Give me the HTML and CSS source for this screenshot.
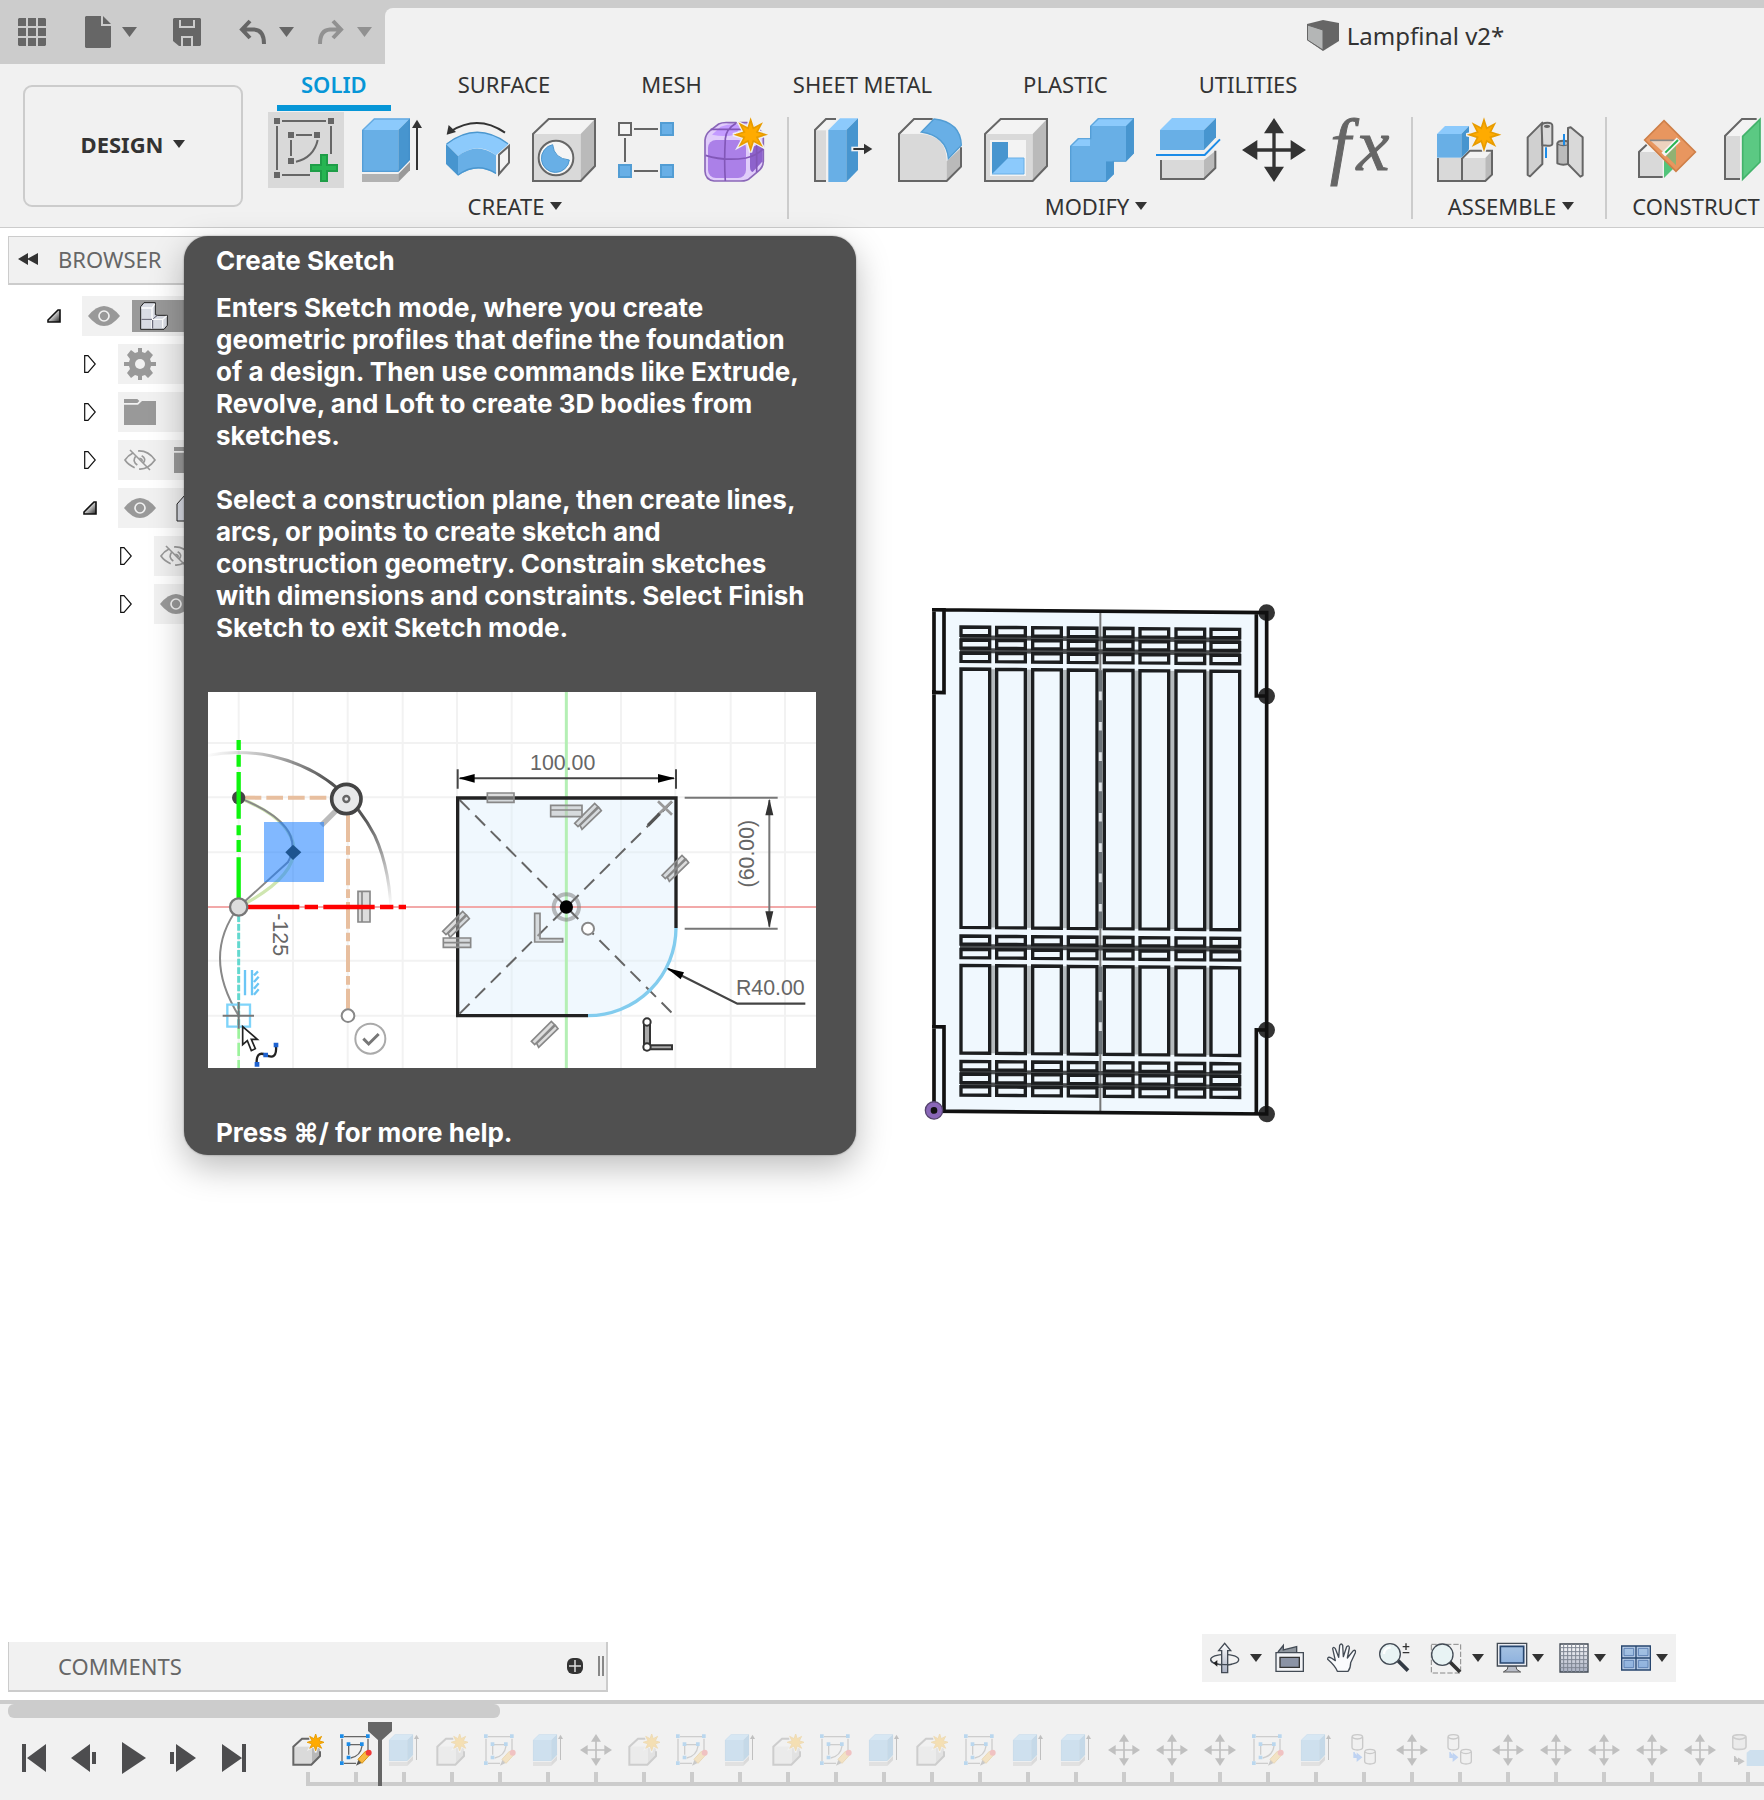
FILE: index.html
```html
<!DOCTYPE html>
<html lang="en">
<head>
<meta charset="utf-8">
<title>Lampfinal v2*</title>
<link rel="stylesheet" href="styles.css">
</head>
<body>
<svg class="defs" aria-hidden="true">
  <defs>
    <linearGradient id="steel" x1="0" y1="0" x2="0" y2="1"><stop offset="0" stop-color="#fff"/><stop offset="1" stop-color="#a9b0c2"/></linearGradient>
    <linearGradient id="screen" x1="0" y1="0" x2="0" y2="1"><stop offset="0" stop-color="#a5c2e2"/><stop offset="1" stop-color="#8fb2de"/></linearGradient>
    <linearGradient id="wedge" x1="0" y1="0" x2="1" y2="1"><stop offset="0.3" stop-color="#fff"/><stop offset="1" stop-color="#222"/></linearGradient>
    <linearGradient id="arcfade" x1="0" y1="0" x2="1" y2="1"><stop offset="0" stop-color="#555" stop-opacity="0"/><stop offset="0.4" stop-color="#555"/><stop offset="0.6" stop-color="#555"/><stop offset="0.9" stop-color="#555" stop-opacity="0"/></linearGradient>
  </defs>
  <symbol id="caret" viewBox="0 0 12 8"><path d="M0 0H12L6 8Z" fill="currentColor"/></symbol>
  <symbol id="star" viewBox="-54 -54 108 108"><path d="M0-48 8-19 32-32 19-8 48 0 19 8 32 32 8 19 0 48-8 19-32 32-19 8-48 0-19-8-32-32-8-19Z" fill="#f1f1f1" stroke="#f1f1f1" stroke-width="12"/><path d="M0-44 8-19 31-31 19-8 44 0 19 8 31 31 8 19 0 44-8 19-31 31-19 8-44 0-19-8-31-31-8-19Z" fill="#ffab00" stroke="#e89c00" stroke-width="5"/></symbol>
  <symbol id="box" viewBox="0 0 192 192"><path d="M3 48 50 3H189V144L146 189H3Z" fill="#f3f3f3"/><path d="M3 48H146V189H3Z" fill="#d9d9d9"/><path d="M146 48 189 3V144L146 189Z" fill="#bababa"/><path d="M3 48 50 3H189V144L146 189H3Z" fill="none" stroke="#666" stroke-width="6"/></symbol>
  <symbol id="move" viewBox="0 0 192 192"><path d="M96 0 126 46H101V91H146V66L192 96 146 126V101H101V146H126L96 192 66 146H91V101H46V126L0 96 46 66V91H91V46H66Z" fill="#333"/></symbol>
  <symbol id="extrude" viewBox="0 0 192 192"><path d="M6 36 42 1H150L115 36Z" fill="#8ccafc"/><path d="M6 36H115V162H6Z" fill="#68afe6"/><path d="M115 36 150 1V126L115 162Z" fill="#4795cf"/><path d="M8 37 43 3H148V125L114 160H8Z" fill="none" stroke="#3f8cc6" stroke-opacity=".5" stroke-width="4"/><path d="M6 168H115V192H6Z" fill="#b2b2b2"/><path d="M115 168 150 132V157L115 192Z" fill="#999"/><path d="M171 156V20" stroke="#333" stroke-width="6"/><path d="M171 5 186 30H156Z" fill="#333"/></symbol>
  <symbol id="eye" viewBox="0 0 96 60"><path d="M0 30Q48-30 96 30Q48 90 0 30Z" fill="#999"/><circle cx="48" cy="30" r="15" fill="#999" stroke="#f1f1f1" stroke-width="5"/></symbol>
  <symbol id="eye-off" viewBox="0 0 96 66"><g fill="none" stroke="#999" stroke-width="5"><path d="M28 11Q12 19 3 33Q12 47 32 56M45 60Q72 62 93 33Q72 4 42 6M35 22Q24 38 40 48M53 20Q68 28 58 42M46 28Q56 30 54 37"/><path d="M18 3 78 63"/></g></symbol>
  <symbol id="closed" viewBox="0 0 12 18"><path d="M.7.7H4L11.3 9 4 17.3H.7Z" fill="#fff" stroke="#111" stroke-width="1.2"/></symbol>
  <symbol id="open" viewBox="0 0 14 14"><path d="M13 1V13H1V11L11 1Z" fill="url(#wedge)" stroke="#111" stroke-width="1.6"/></symbol>
  <symbol id="folder" viewBox="0 0 96 78"><path d="M0 0H40L46 6 40 12H0ZM0 17H42L54 6H96V78H0Z" fill="#999"/></symbol>
  <symbol id="body" viewBox="0 0 84 84"><path d="M2 82V14L12 2H46V38L52 40H82V70L72 82Z" fill="#d9dce4" stroke="#222" stroke-width="3"/><path d="M4 18H36L44 6M36 18V80M4 52H36M36 52H68L80 42M68 52V78" fill="none" stroke="#fff" stroke-width="4"/><path d="M4 52H36M38 54V80M40 50 52 40" stroke="#556" stroke-width="3"/></symbol>
  <symbol id="t-comp" viewBox="0 0 96 96"><path d="M4 92V36L30 13H54L84 40V64L57 92Z" fill="#f1f1f1"/><path d="M4 38H60V92H4Z" fill="#dadada"/><path d="M60 38 84 20V66L60 92Z" fill="#b8b8b8"/><path d="M52 14H30L4 38V92H58L84 66V52" fill="none" stroke="#666" stroke-width="6"/><use href="#star" x="40" y="-6" width="62" height="62"/></symbol>
  <symbol id="t-sketch" viewBox="0 0 96 96"><g fill="none" stroke="#666" stroke-width="4"><path d="M12 8H78M6 14V82M84 14V52M12 88H48M30 32H60M26 36V62M66 36Q62 66 32 72"/></g><g fill="#1c8ce8"><path d="M0 1h11v11H0zM78 1h11v11H78zM0 82h11v11H0zM20 25h11v11H20zM60 25h11v11H60zM20 65h11v11H20z"/></g><path d="M48 95 56 76 66 86Z" fill="#555"/><path d="M54 76 76 52 88 64 66 88Z" fill="#f7b943" stroke="#d99410" stroke-width="3"/><circle cx="86" cy="56" r="9" fill="#f03a3a"/></symbol>
  <symbol id="t-copy" viewBox="-8 0 96 96"><g fill="#eee" stroke="#555" stroke-width="4"><path d="M4 10Q4 2 20 2T36 10V40Q36 48 20 48T4 40ZM42 54Q42 46 58 46T74 54V82Q74 90 58 90T42 82Z"/><path d="M4 10Q20 20 36 10M42 54Q58 64 74 54" fill="none"/></g><path d="M10 54V70H24M20 60 32 70 20 80Z" fill="#2f7df6" stroke="#2f7df6" stroke-width="4"/></symbol>
  <symbol id="t-base" viewBox="0 0 96 96"><path d="M2 10Q2 2 22 2T42 10V38Q42 46 22 46T2 38Z" fill="#ddd" stroke="#666" stroke-width="5"/><path d="M2 10Q22 22 42 10" fill="none" stroke="#666" stroke-width="5"/><path d="M8 66V82H24M20 74 34 82 20 90Z" fill="#444" stroke="#444" stroke-width="4"/><path d="M44 56 54 48H96V96H44Z" fill="#68afe6"/></symbol>
</svg>

<header class="topbar">
  <div class="quick">
    <button type="button" aria-label="Data panel"><svg class="i32" viewBox="0 0 32 32"><path d="M3 2h7v8H2V3zM12 2h8v8h-8zM22 2h7l1 1v7h-8zM2 12h8v8H2zM12 12h8v8h-8zM22 12h8v8h-8zM2 22h8v8H3l-1-1zM12 22h8v8h-8zM22 22h8v7l-1 1h-7z" fill="#666"/></svg></button>
    <button type="button" class="with-caret" aria-label="File"><svg class="i32" viewBox="0 0 32 32"><path d="M4 0H19V10H29V31L28 32H4L3 31V1ZM21 0 29 8H21Z" fill="#666"/></svg><svg class="caret16"><use href="#caret"/></svg></button>
    <button type="button" aria-label="Save"><svg class="i32" viewBox="0 0 32 32"><path d="M3 2H29L30 3V29L29 30H8L2 25V3Z" fill="#666"/><path d="M9 4V11H23V4M11 30V21H21V30" fill="none" stroke="#ccc" stroke-width="2"/><path d="M13 23h6v7h-6zM10 2h12v8H10z" fill="#666"/></svg></button>
    <div class="history">
      <button type="button" class="with-caret" aria-label="Undo"><svg class="i32" viewBox="0 0 32 32"><path d="M13 5 5 13.500 13 22M5 13.500H17Q27 14 27 28" fill="none" stroke="#666" stroke-width="4"/></svg><svg class="caret16"><use href="#caret"/></svg></button>
      <button type="button" class="with-caret faded" aria-label="Redo"><svg class="i32" viewBox="0 0 32 32"><path d="M18 5 26 13.500 18 22M26 13.500H15Q5 14 5 28" fill="none" stroke="#919191" stroke-width="4"/></svg><svg class="caret16"><use href="#caret"/></svg></button>
    </div>
  </div>
  <div class="doc-tab"><svg width="32" height="32" viewBox="0 0 32 32"><path d="M0 4 16 0 32 3V21L16 31 0 20Z" fill="#666"/><path d="M.5 5 16 10V30L.5 20Z" fill="#b4b6b6" stroke="#666"/></svg><span>Lampfinal v2*</span></div>
</header>

<section class="ribbon">
  <button type="button" class="workspace">DESIGN <svg class="caret12"><use href="#caret"/></svg></button>
  <div class="ribbon-main">
    <nav class="tabs">
      <a href="#solid" class="active">SOLID</a><a href="#surface">SURFACE</a><a href="#mesh">MESH</a><a href="#sheet">SHEET METAL</a><a href="#plastic">PLASTIC</a><a href="#utilities">UTILITIES</a>
    </nav>
    <div class="groups">
      <div class="group">
        <div class="tools">
          <button type="button" class="hot" aria-label="Create Sketch"><svg viewBox="0 0 192 192"><g fill="none" stroke="#666" stroke-width="6"><path d="M24 9H156M9 24V156M171 24V108M24 171H108M66 51H114M51 66V114M131 66C124 100 100 124 66 131"/></g><path d="M0 0h18v18H0zM162 0h18v18h-18zM0 162h18v18H0zM42 42h18v18H42zM120 42h18v18h-18zM42 120h18v18H42z" fill="#666"/><path d="M141 111H159V141H189V159H159V189H141V159H111V141H141Z" fill="#27b552" stroke="#1f9e48" stroke-width="6"/></svg></button>
          <button type="button" aria-label="Extrude"><svg><use href="#extrude"/></svg></button>
          <button type="button" aria-label="Revolve"><svg viewBox="0 0 192 192"><path d="M0 78Q92 8 188 78L150 112Q96 68 36 114Z" fill="#8ccafc"/><path d="M36 114Q92 70 150 112V168Q96 132 36 173Z" fill="#68afe6"/><path d="M0 78 36 114V173L0 138Z" fill="#4795cf"/><path d="M2 78Q92 8 186 77M36 171Q92 130 150 166" fill="none" stroke="#4b97cf" stroke-width="4"/><path d="M159 110 189 84V134L159 168Z" fill="#f3f3f3" stroke="#666" stroke-width="6"/><path d="M14 40Q96-12 177 44" fill="none" stroke="#333" stroke-width="6"/><path d="M2 50 8 21 30 42Z" fill="#333"/></svg></button>
          <button type="button" aria-label="Hole"><svg viewBox="0 0 192 192"><use href="#box"/><circle cx="72" cy="120" r="52" fill="#f5f5f5" stroke="#666" stroke-width="6"/><path d="M62 80A42 42 0 1 0 112 126Q66 122 62 80Z" fill="#68afe6" stroke="#4b97cf" stroke-width="3"/></svg></button>
          <button type="button" aria-label="Rectangular Pattern"><svg viewBox="0 0 192 192"><path d="M48 33H120M21 60V132M48 159H120" stroke="#666" stroke-width="6"/><path d="M3 15h36v36H3z" fill="#f5f5f5" stroke="#666" stroke-width="6"/><path d="M129 15h36v36h-36zM3 141h36v36H3zM129 141h36v36h-36z" fill="#68afe6" stroke="#529dd4" stroke-width="6"/></svg></button>
          <button type="button" aria-label="Create Form"><svg viewBox="0 0 192 192"><path d="M3 66Q5 48 18 38L44 18Q56 12 76 14H130Q178 30 178 60V130Q178 148 162 160L138 180Q130 190 106 189H30Q4 186 3 160Z" fill="#e0ccfa" stroke="#8a67b8" stroke-width="5"/><path d="M24 50 50 26Q76 16 112 20L96 50Q60 58 24 50Z" fill="#c39bff"/><rect x="12" y="66" width="114" height="114" rx="24" fill="#ab80e8"/><path d="M138 90 176 74V130L146 162Q138 160 138 146Z" fill="#8d62cc"/><path d="M64 189Q60 130 64 62Q66 34 96 16M5 112Q60 130 126 120Q160 112 178 92M20 34H130M158 70V162" fill="none" stroke="#8257b8" stroke-width="5"/><use href="#star" x="86" y="-4" width="108" height="108"/></svg></button>
        </div>
        <button type="button" class="group-label">CREATE<svg class="caret12"><use href="#caret"/></svg></button>
      </div>
      <div class="group">
        <div class="tools">
          <button type="button" aria-label="Press Pull"><svg viewBox="0 0 192 192"><path d="M9 36 42 3H74L42 36V189H9Z" fill="#f3f3f3"/><path d="M9 37H42V189H9Z" fill="#d9d9d9"/><path d="M72 3H42L9 36V189H42" fill="none" stroke="#666" stroke-width="6"/><path d="M49 36 84 1H138L103 36Z" fill="#8ccafc"/><path d="M49 36H103V192H49Z" fill="#68afe6"/><path d="M103 36 138 1V156L103 192Z" fill="#4795cf"/><path d="M118 86h30v14h-30z" fill="#f1f1f1"/><path d="M124 93H160" stroke="#333" stroke-width="6"/><path d="M156 77 181 93 156 109Z" fill="#333"/></svg></button>
          <button type="button" aria-label="Fillet"><svg viewBox="0 0 192 192"><path d="M3 48 48 3H104L66 44Z" fill="#f3f3f3"/><path d="M3 48H70Q146 54 146 130V189H3Z" fill="#d9d9d9"/><path d="M146 130 189 90V146L146 189Z" fill="#bababa"/><path d="M104 3H48L3 48V189H146L189 146V88" fill="none" stroke="#666" stroke-width="6"/><path d="M70 42 108 3Q188 12 190 82L151 122Q146 54 70 42Z" fill="#68afe6" stroke="#529dd4" stroke-width="4"/></svg></button>
          <button type="button" aria-label="Shell"><svg viewBox="0 0 192 192"><use href="#box"/><path d="M18 66h108v108H18z" fill="#f3f3f3"/><path d="M24 72H72V120L24 168Z" fill="#4795cf"/><path d="M24 168 72 120H120V168Z" fill="#8ccafc" stroke="#68afe6" stroke-width="3"/></svg></button>
          <button type="button" aria-label="Combine"><svg viewBox="0 0 192 192"><path d="M0 84 24 60H60V24L84 0H192V106L168 130H132V168L108 192H0Z" fill="#8ccafc"/><path d="M0 84H60V24H168V130H108V192H0Z" fill="#68afe6"/><path d="M168 24 192 0V106L168 130ZM108 192V130H132V168Z" fill="#4795cf"/><path d="M2 85 25 62H62V25L85 2H190V105L167 130H130V167L107 190H2Z" fill="none" stroke="#4b97cf" stroke-opacity=".7" stroke-width="4"/></svg></button>
          <button type="button" aria-label="Split Body"><svg viewBox="0 0 192 192"><path d="M12 36 48 0H180L144 36Z" fill="#8ccafc"/><path d="M12 36H144V96H12Z" fill="#68afe6"/><path d="M144 36 180 0V58L144 96Z" fill="#4795cf"/><path d="M12 126H144V183H12Z" fill="#d9d9d9"/><path d="M144 126 179 98V150L144 183Z" fill="#bababa"/><path d="M15 126V183H144L178 150V98" fill="none" stroke="#666" stroke-width="6"/><path d="M0 111H146L192 64" fill="none" stroke="#1c8ce8" stroke-width="6"/></svg></button>
          <button type="button" aria-label="Move"><svg><use href="#move"/></svg></button>
          <button type="button" aria-label="Change Parameters"><svg viewBox="0 0 64 64"><text class="fx" x="2" y="52">f<tspan dx="6">x</tspan></text></svg></button>
        </div>
        <button type="button" class="group-label">MODIFY<svg class="caret12"><use href="#caret"/></svg></button>
      </div>
      <div class="group">
        <div class="tools">
          <button type="button" aria-label="New Component"><svg viewBox="0 0 192 192"><path d="M78 120 100 98H168V170L148 189H78Z" fill="#f3f3f3"/><path d="M3 120H148V189H3Z" fill="#d9d9d9"/><path d="M148 120 168 98V170L148 189Z" fill="#bababa"/><path d="M78 122 102 98H168V170L148 189H6V120M78 120V189" fill="none" stroke="#666" stroke-width="6"/><path d="M3 48 27 24H99L76 48Z" fill="#8ccafc"/><path d="M3 48H76V119H3Z" fill="#68afe6"/><path d="M76 48 99 24V96L76 119Z" fill="#4795cf"/><use href="#star" x="90" y="-4" width="108" height="108"/></svg></button>
          <button type="button" aria-label="Joint"><svg viewBox="0 0 192 192"><g stroke="#666" stroke-width="6" stroke-linejoin="round"><path d="M17 58 61 14V138L24 175 17 171Z" fill="#d0d0d0"/><path d="M59 24Q60 14 76 14T91 24V78Q90 86 61 82Z" fill="#dadada"/><ellipse cx="75" cy="25" rx="6" ry="2" fill="#666"/><path d="M106 76Q108 68 124 68T142 76V136Q124 144 106 136Z" fill="#bbb"/><path d="M106 78Q124 88 142 78" fill="none" stroke-width="4"/><path d="M138 30 146 28 182 58V172L175 176 138 138Z" fill="#d9d9d9"/></g><path d="M72 88V120M126 48V82" stroke="#1c8ce8" stroke-width="6"/></svg></button>
        </div>
        <button type="button" class="group-label centered">ASSEMBLE<svg class="caret12"><use href="#caret"/></svg></button>
      </div>
      <div class="group">
        <div class="tools">
          <button type="button" aria-label="Offset Plane"><svg viewBox="0 0 192 192"><path d="M27 102 52 78 98 124V178H27Z" fill="#f3f3f3"/><path d="M27 102H75L98 124V178H27Z" fill="#d9d9d9"/><path d="M50 80 27 102V177H98" fill="none" stroke="#666" stroke-width="6"/><path d="M102 118 138 144 102 180Z" fill="#52c47a"/><path d="M102 8 196 102 138 160 44 66Z" fill="#e8965f" stroke="#cf8049" stroke-width="5"/><path d="M62 68H142L104 106Z" fill="#edd2be"/><path d="M60 67H134" stroke="#888" stroke-width="5"/><path d="M104 108 138 76V142Z" fill="#91b173"/><path d="M100 110 146 64" stroke="#f5f5f5" stroke-width="16"/><path d="M106 104 144 66" stroke="#27b552" stroke-width="6"/></svg></button>
          <button type="button" aria-label="Plane at Angle"><svg viewBox="0 0 192 192"><path d="M24 54 76 3H124L74 54Z" fill="#f3f3f3"/><path d="M24 54H72V184H24Z" fill="#d9d9d9"/><path d="M122 3H78L27 54V183H72" fill="none" stroke="#666" stroke-width="6"/><path d="M80 55 132 4V132L80 184Z" fill="#5bc983" stroke="#42b36b" stroke-width="5"/></svg></button>
        </div>
        <button type="button" class="group-label centered">CONSTRUCT<svg class="caret12"><use href="#caret"/></svg></button>
      </div>
    </div>
  </div>
</section>

<main class="canvas">
  <section class="browser">
    <h2><svg width="20" height="12" viewBox="0 0 20 12"><path d="M0 6 10 0V12ZM9 6 20 0V12Z" fill="#333"/></svg>BROWSER</h2>
    <ul class="tree">
      <li><svg class="tw-open"><use href="#open"/></svg><div class="node"><svg class="eye"><use href="#eye"/></svg><span class="selected"><svg width="28" height="28"><use href="#body"/></svg></span></div></li>
      <li class="l2"><svg class="tw"><use href="#closed"/></svg><div class="node"><svg width="32" height="32" viewBox="0 0 32 32"><path d="M14 0h4v4l3 1 3-3 5 5-3 4 1 3h5v4h-5l-1 3 3 4-5 5-3-3-3 1v4h-4v-4l-3-1-4 3-4-5 3-4-1-3H0v-4h5l1-3-3-4 4-5 4 3 3-1z" fill="#999"/><circle cx="16" cy="16" r="5" fill="#f1f1f1"/></svg></div></li>
      <li class="l2"><svg class="tw"><use href="#closed"/></svg><div class="node"><svg width="32" height="26"><use href="#folder"/></svg></div></li>
      <li class="l2"><svg class="tw"><use href="#closed"/></svg><div class="node"><svg width="32" height="22"><use href="#eye-off"/></svg><svg class="second" width="32" height="26"><use href="#folder"/></svg></div></li>
      <li class="l2"><svg class="tw-open"><use href="#open"/></svg><div class="node"><svg class="eye"><use href="#eye"/></svg><svg class="second" width="28" height="28" viewBox="0 0 28 28"><path d="M3 27V10L11 1H27V19L19 27Z" fill="#d9dce4" stroke="#222"/></svg></div></li>
      <li class="l3"><svg class="tw"><use href="#closed"/></svg><div class="node"><svg width="32" height="22"><use href="#eye-off"/></svg></div></li>
      <li class="l3"><svg class="tw"><use href="#closed"/></svg><div class="node"><svg class="eye"><use href="#eye"/></svg></div></li>
    </ul>
  </section>

  <svg class="model" viewBox="0 0 1110 1620" role="img" aria-label="Lamp sketch">
    <defs>
      <g id="slats" fill="#f0f8fe" stroke="#1c1e20" stroke-width="10">
        <path d="M123 110h86v25h-86zM123 149h86v24h-86zM123 188h86v25h-86zM123 236h86v775h-86zM123 1037h86v24h-86zM123 1077h86v25h-86zM123 1125h86v263h-86zM123 1413h86v25h-86zM123 1451h86v25h-86zM123 1489h86v25h-86z"/>
      </g>
    </defs>
    <g transform="skewY(0.5)">
      <path d="M42 59H1040V1563H42Z" fill="#f0f8fe"/>
      <path d="M541 59V1563" stroke="#777" stroke-width="6"/>
      <path d="M120 236H962V1011H120ZM120 1125H962V1388H120Z" fill="#b4babd"/>
      <path d="M120 135H962V149H120ZM120 173H962V188H120ZM120 1061H962V1077H120ZM120 1438H962V1451H120ZM120 1476H962V1489H120Z" fill="#4a4d4f"/>
      <use href="#slats"/><use href="#slats" x="107"/><use href="#slats" x="215"/><use href="#slats" x="322"/><use href="#slats" x="430"/><use href="#slats" x="537"/><use href="#slats" x="645"/><use href="#slats" x="750"/>
      <path d="M541 236V1011M541 1125V1388" stroke="#6c7378" stroke-width="10"/>
      <path d="M541 300V960M541 1201V1340" stroke="#e0e4e7" stroke-width="9" stroke-dasharray="26 65"/>
      <g fill="none" stroke="#111" stroke-width="11"><path d="M42 59H1040V1563H42ZM36 59H72V307H36M1040 59H1009V309H1040M36 1310H72V1563M1040 1311H1009V1563"/></g>
      <g fill="#111" fill-opacity=".85"><circle cx="1040" cy="59" r="25"/><circle cx="1040" cy="309" r="25"/><circle cx="1040" cy="1311" r="25"/><circle cx="1040" cy="1563" r="25"/></g>
      <circle cx="42" cy="1561" r="26" fill="#8a67b8" stroke="#55446e" stroke-width="4"/><circle cx="42" cy="1561" r="10" fill="#111"/>
    </g>
  </svg>

  <aside class="tooltip" role="tooltip">
    <h3>Create Sketch</h3>
    <p>Enters Sketch mode, where you create<br>geometric profiles that define the foundation<br>of a design. Then use commands like Extrude,<br>Revolve, and Loft to create 3D bodies from<br>sketches.</p>
    <p>Select a construction plane, then create lines,<br>arcs, or points to create sketch and<br>construction geometry. Constrain sketches<br>with dimensions and constraints. Select Finish<br>Sketch to exit Sketch mode.</p>
    <svg class="figure" viewBox="0 0 1824 1128" role="img" aria-label="Sketch example">
      <path d="M0 0H1824V1128H0Z" fill="#fff"/>
      <path d="M92 0V1128M255 0V1128M419 0V1128M584 0V1128M747 0V1128M911 0V1128M1239 0V1128M1402 0V1128M1568 0V1128M1731 0V1128M0 153H1824M0 316H1824M0 481H1824M0 806H1824M0 971H1824" stroke="#f2f2f2" stroke-width="6"/>
      <path d="M749 318H1404V708A264 264 0 0 1 1140 971H749Z" fill="#f0f8fe"/>
      <path d="M911 318V971M1239 318V971M749 481H1404M749 806H1404" stroke="#e8f0f5" stroke-width="6"/>
      <path d="M1075 0V1128" stroke="#b4efb4" stroke-width="9"/><path d="M0 645H1824" stroke="#f2a9a9" stroke-width="6"/>
      <g fill="none" stroke="#666" stroke-width="6" stroke-dasharray="42 24"><path d="M755 324 1404 975M755 965 1404 318"/></g>
      <path d="M1140 971H749V318H1404V708" fill="none" stroke="#222" stroke-width="10"/>
      <path d="M1404 708A264 264 0 0 1 1140 971" fill="none" stroke="#82ccee" stroke-width="10"/>
      <path d="M749 232V290M1404 232V290M755 259H1398" stroke="#444" stroke-width="6"/><path d="M752 259 800 246V272ZM1401 259 1350 246V272Z" fill="#000"/>
      <path d="M1430 317H1709M1430 710H1709M1684 324V704" stroke="#777" stroke-width="6"/><path d="M1684 320 1696 370H1672ZM1684 708 1696 658H1672Z" fill="#333"/>
      <path d="M1380 830 1588 935H1792" fill="none" stroke="#444" stroke-width="7"/><path d="M1376 828 1428 841 1418 862Z" fill="#000"/>
      <g class="dim"><text x="1064" y="233" text-anchor="middle">100.00</text><text x="1687" y="908" text-anchor="middle">R40.00</text><text text-anchor="middle" transform="translate(1637 485) rotate(-90)">(60.00)</text><text transform="translate(196 664) rotate(90)" x="0" y="0">-125</text></g>
      <circle cx="1075" cy="645" r="38" fill="none" stroke="#777" stroke-opacity=".5" stroke-width="12"/><circle cx="1075" cy="645" r="20" fill="#000"/>
      <circle cx="1140" cy="710" r="18" fill="#fff" stroke="#888" stroke-width="6"/>
      <g fill="#bbb" fill-opacity=".5" stroke="#888" stroke-width="5">
        <path d="M838 303h80v28h-80zM1028 340h94v14h-94zM1028 354h94v20h-94zM706 738h82v14h-82zM706 752h82v14h-82z"/>
        <g id="par"><path d="M1100 394 1160 334 1170 344 1110 404ZM1116 400 1172 346 1180 356 1122 412Z"/></g>
        <use href="#par" x="262" y="156"/><use href="#par" x="-130" y="654"/><use href="#par" x="-396" y="324"/>
        <path d="M980 664h16v76h68v10h-84z"/><path d="M450 598h12v92h-12zM462 598h24v92h-24z"/>
      </g>
      <path d="M1308 990h18v70h66v12h-84z" fill="#aaa" stroke="#333" stroke-width="6"/><circle cx="1317" cy="990" r="11" fill="#fff" stroke="#333" stroke-width="6"/><circle cx="1317" cy="1065" r="11" fill="#fff" stroke="#333" stroke-width="6"/>
      <path d="M1350 328 1392 368M1392 328 1350 368" stroke="#999" stroke-width="8"/><path d="M1320 400 1355 365" stroke="#555" stroke-width="10"/>
      <path d="M110 317H370" stroke="#e8bf9f" stroke-width="12" stroke-dasharray="50 15"/>
      <path d="M420 370V950" stroke="#e8bf9f" stroke-width="12" stroke-dasharray="80 12 26 12"/>
      <path d="M0 190Q90 172 190 192Q400 240 500 430Q560 560 548 760" fill="none" stroke="url(#arcfade)" stroke-width="9"/>
      <path d="M92 645Q260 560 258 470Q250 380 92 317" fill="none" stroke="#cfe6b0" stroke-width="10"/>
      <path d="M92 645 240 510Q300 400 92 317" fill="none" stroke="#888" stroke-width="6"/>
      <path d="M340 400 385 355" stroke="#bbb" stroke-width="16"/>
      <path d="M168 390H348V570H168Z" fill="#1f80ff" fill-opacity=".56"/><path d="M232 481 255 458 280 481 255 504Z" fill="#1e5590"/>
      <circle cx="92" cy="317" r="20" fill="#444"/>
      <path d="M92 144V645" stroke="#0ef50e" stroke-width="13" stroke-dasharray="30 14 36 16 140 20"/>
      <path d="M92 670V1000" stroke="#63d8cf" stroke-width="9" stroke-dasharray="20 6"/><path d="M92 1000V1128" stroke="#9cf39c" stroke-width="8" stroke-dasharray="40 12"/>
      <path d="M120 645H594" stroke="#f00" stroke-width="13" stroke-dasharray="154 16 40 16"/>
      <path d="M92 645Q-20 790 92 971" fill="none" stroke="#888" stroke-width="6"/>
      <circle cx="92" cy="645" r="26" fill="#dcdcdc" stroke="#777" stroke-width="7"/>
      <circle cx="415" cy="321" r="44" fill="#e8e9ea" stroke="#444" stroke-width="11"/><circle cx="415" cy="321" r="9" fill="none" stroke="#666" stroke-width="7"/>
      <circle cx="420" cy="971" r="19" fill="#fff" stroke="#888" stroke-width="6"/>
      <circle cx="487" cy="1040" r="45" fill="#fff" stroke="#aaa" stroke-width="6"/><path d="M466 1040 482 1056 512 1026" fill="none" stroke="#777" stroke-width="9"/>
      <path d="M58 938H126V1004H58Z" fill="none" stroke="#7fd4fa" stroke-width="7"/><path d="M44 971H138M92 930V1010" stroke="#777" stroke-width="6"/>
      <path d="M111 834V910M132 834V910M138 850 150 838M138 870 152 854M138 890 152 874M138 908 152 892" stroke="#6bc6f5" stroke-width="7"/>
      <path d="M104 1004V1058L118 1046 130 1076 142 1070 130 1042H148Z" fill="#fff" stroke="#222" stroke-width="5"/>
      <path d="M146 1116Q144 1076 172 1088Q208 1108 204 1060" fill="none" stroke="#222" stroke-width="7"/><path d="M140 1110h14v14h-14zM166 1082h14v14h-14zM197 1052h14v14h-14z" fill="#1e62d0"/>
    </svg>
    <p class="help">Press ⌘/ for more help.</p>
  </aside>

  <div class="dock">
    <section class="comments"><h2>COMMENTS</h2><button type="button" aria-label="Add comment"><svg width="16" height="16" viewBox="0 0 16 16"><rect width="16" height="16" rx="6" fill="#333"/><path d="M8 2V14M2 8H14" stroke="#ddd" stroke-width="1.500"/></svg></button><span class="grip"></span></section>
    <div class="navbar">
      <button type="button" class="wide" aria-label="Orbit"><svg class="i32" viewBox="0 0 96 96"><ellipse cx="50" cy="53" rx="42" ry="16" fill="none" stroke="#434b55" stroke-width="4"/><path d="M41 92V26H32L50 4 68 26H59V92Z" fill="url(#steel)" stroke="#434b55" stroke-width="4"/><path d="M8 53Q14 72 72 67" fill="none" stroke="#434b55" stroke-width="4"/><path d="M16 64 28 54V74Z" fill="#222"/></svg><svg class="caret12"><use href="#caret"/></svg></button>
      <button type="button" class="solo" aria-label="Look At"><svg class="i32" viewBox="0 0 96 96"><path d="M12 30 28 10V24L68 14V32" fill="#8f969e" stroke="#434b55" stroke-width="4"/><path d="M6 32H88V88H6Z" fill="#f2f3f6" stroke="#434b55" stroke-width="4"/><path d="M18 46H76V76H18Z" fill="#8b93a5" stroke="#333" stroke-width="4"/></svg></button>
      <button type="button" class="solo" aria-label="Pan"><svg class="i32" viewBox="0 0 96 96"><path d="M34 88Q28 72 5 52Q4 42 16 48L28 56 20 20Q22 12 28 20L38 46 41 10Q46 2 50 10L52 44 62 14Q70 8 70 18L64 48 82 26Q90 22 88 32L74 62Q74 78 66 88Z" fill="#fafbfd" stroke="#434b55" stroke-width="4" stroke-linejoin="round"/></svg></button>
      <button type="button" class="solo" aria-label="Zoom"><svg class="i32" viewBox="0 0 96 96"><path d="M60 56 90 86" stroke="#333b44" stroke-width="11"/><circle cx="36" cy="36" r="31" fill="#e8f3f4" stroke="#434b55" stroke-width="4"/><path d="M18 36Q18 18 38 16" fill="none" stroke="#fff" stroke-width="7"/><path d="M74 14H94M84 4V24M74 32H94" stroke="#333" stroke-width="4"/></svg></button>
      <button type="button" class="wide" aria-label="Fit"><svg class="i32" viewBox="0 0 96 96"><path d="M4 7H92V93H4Z" fill="none" stroke="#888" stroke-width="3" stroke-dasharray="16 6"/><path d="M60 60 90 90" stroke="#333" stroke-width="11"/><circle cx="37" cy="38" r="32" fill="#e8f3f4" stroke="#434b55" stroke-width="4"/></svg><svg class="caret12"><use href="#caret"/></svg></button>
      <div class="display">
        <button type="button" aria-label="Display settings"><svg class="i32" viewBox="0 0 96 96"><path d="M36 72H60L62 82 74 90H22L34 82Z" fill="#b9bdc8" stroke="#555" stroke-width="3"/><path d="M4 4H92V72H4Z" fill="#e9ebf0" stroke="#434b55" stroke-width="4"/><path d="M13 13H83V63H13Z" fill="url(#screen)" stroke="#27466f" stroke-width="5"/></svg><svg class="caret12"><use href="#caret"/></svg></button>
        <button type="button" aria-label="Grid and snaps"><svg class="i32" viewBox="0 0 96 96"><path d="M6 6H90V90H6Z" fill="url(#steel)" stroke="#434b55" stroke-width="4"/><path d="M17 6V90M29 6V90M41 6V90M53 6V90M65 6V90M77 6V90M6 17H90M6 29H90M6 41H90M6 53H90M6 65H90M6 77H90" stroke="#7e8592" stroke-width="3"/></svg><svg class="caret12"><use href="#caret"/></svg></button>
        <button type="button" aria-label="Viewports"><svg class="i32" viewBox="0 0 96 96"><path d="M5 12H91V84H5Z" fill="#b7cce6" stroke="#27466f" stroke-width="4"/><path d="M48 12V84M5 48H91" stroke="#27466f" stroke-width="4"/><path d="M12 19H41V41H12ZM55 19H84V41H55ZM12 55H41V77H12ZM55 55H84V77H55Z" fill="url(#screen)" stroke="#5f83b5" stroke-width="3"/></svg><svg class="caret12"><use href="#caret"/></svg></button>
      </div>
    </div>
  </div>
</main>

<footer class="timeline">
  <div class="scroll"><div class="thumb"></div></div>
  <div class="timeline-row">
    <div class="playback">
      <button type="button" aria-label="Go to start"><svg viewBox="0 0 32 32"><path d="M4 2h4v28H4zM28 2V30L9 16Z" fill="#4d4d4f"/></svg></button>
      <button type="button" aria-label="Step back"><svg viewBox="0 0 32 32"><path d="M22 2V30L3 16ZM24 10h4v12h-4z" fill="#4d4d4f"/></svg></button>
      <button type="button" aria-label="Play"><svg viewBox="0 0 32 32"><path d="M4 0V32L28 16Z" fill="#4d4d4f"/></svg></button>
      <button type="button" aria-label="Step forward"><svg viewBox="0 0 32 32"><path d="M2 10h4v12H2zM8 2V30L28 16Z" fill="#4d4d4f"/></svg></button>
      <button type="button" aria-label="Go to end"><svg viewBox="0 0 32 32"><path d="M4 2V30L24 16ZM24 2h4v28h-4z" fill="#4d4d4f"/></svg></button>
    </div>
    <ol class="track">
      <li class="done"><svg><use href="#t-comp"/></svg></li><li class="done"><svg><use href="#t-sketch"/></svg></li>
      <li><svg><use href="#extrude"/></svg></li><li><svg><use href="#t-comp"/></svg></li><li><svg><use href="#t-sketch"/></svg></li><li><svg><use href="#extrude"/></svg></li><li><svg><use href="#move"/></svg></li>
      <li><svg><use href="#t-comp"/></svg></li><li><svg><use href="#t-sketch"/></svg></li><li><svg><use href="#extrude"/></svg></li>
      <li><svg><use href="#t-comp"/></svg></li><li><svg><use href="#t-sketch"/></svg></li><li><svg><use href="#extrude"/></svg></li>
      <li><svg><use href="#t-comp"/></svg></li><li><svg><use href="#t-sketch"/></svg></li><li><svg><use href="#extrude"/></svg></li><li><svg><use href="#extrude"/></svg></li>
      <li><svg><use href="#move"/></svg></li><li><svg><use href="#move"/></svg></li><li><svg><use href="#move"/></svg></li>
      <li><svg><use href="#t-sketch"/></svg></li><li><svg><use href="#extrude"/></svg></li><li><svg><use href="#t-copy"/></svg></li><li><svg><use href="#move"/></svg></li><li><svg><use href="#t-copy"/></svg></li>
      <li><svg><use href="#move"/></svg></li><li><svg><use href="#move"/></svg></li><li><svg><use href="#move"/></svg></li><li><svg><use href="#move"/></svg></li><li><svg><use href="#move"/></svg></li><li><svg><use href="#t-base"/></svg></li>
    </ol>
    <svg class="marker" viewBox="0 0 24 64"><path d="M0 0H24V9L14 18V64H10V18L0 9Z" fill="#666"/></svg>
  </div>
</footer>
</body>
</html>
```
FILE: styles.css
```css
*, *::before, *::after { box-sizing: border-box; }
html, body { height: 100%; }
body {
  margin: 0;
  display: flex;
  flex-direction: column;
  overflow: hidden;
  background: #fff;
  color: #333;
  font: 22px/32px "Noto Sans", "Open Sans", sans-serif;
}
button { border: 0; padding: 0; background: none; color: inherit; font: inherit; display: flex; align-items: center; flex: none; }
svg { display: block; flex: none; overflow: visible; }
h2, h3, p, ul, ol { margin: 0; padding: 0; font-size: inherit; font-weight: inherit; }
ul, ol { list-style: none; }
.defs { position: absolute; width: 0; height: 0; }
.i32 { width: 32px; height: 32px; }
.caret12 { width: 12px; height: 8px; }
.caret16 { width: 15px; height: 10px; }

/* Title bar */
.topbar { display: flex; background: #ccc; flex: none; }
.quick { display: flex; align-items: center; gap: 34px; height: 64px; padding: 0 13px 0 16px; color: #666; }
.with-caret { gap: 8px; }
.history { display: flex; gap: 21px; }
.history .with-caret { gap: 10px; }
.faded { color: #919191; }
.doc-tab {
  flex: 1;
  margin-top: 8px;
  padding-left: 662px;
  border-top-left-radius: 8px;
  background: #f1f1f1;
  display: flex;
  align-items: center;
  justify-content: center;
  gap: 8px;
  font-size: 24px;
  white-space: nowrap;
}

/* Ribbon */
.ribbon { display: flex; flex: none; background: #f1f1f1; border-bottom: 1px solid #ccc; }
.workspace {
  width: 220px;
  height: 122px;
  margin: 21px 25px 20px 23px;
  padding-bottom: 4px;
  border: 2px solid #ccc;
  border-radius: 9px;
  justify-content: center;
  gap: 10px;
  font-weight: 700;
}
.tabs { display: flex; gap: 43px; padding-left: 9px; }
.tabs a { padding: 1px 24px 2px; line-height: 38px; border-bottom: 6px solid transparent; color: inherit; text-decoration: none; white-space: nowrap; }
.tabs .active { color: #0696d7; border-color: #0696d7; font-weight: 600; }
.groups { display: flex; margin-top: 1px; }
.group + .group { position: relative; margin-left: 32px; }
.group + .group::before { content: ""; position: absolute; left: -19px; top: 5px; bottom: 7px; width: 2px; background: #ccc; }
.tools { display: flex; gap: 10px; }
.tools button { width: 76px; height: 76px; padding: 6px; }
.tools svg { width: 64px; height: 64px; }
.tools .hot { background: #d9d9d9; }
.fx { font: italic 74px "Liberation Serif", serif; fill: #666; stroke: #666; stroke-width: 1px; }
.group-label { width: 100%; height: 38px; padding: 0 12px 2px 0; justify-content: center; gap: 6px; }
.group-label.centered { padding-right: 0; }

/* Canvas */
.canvas { position: relative; flex: 1; display: flex; flex-direction: column; justify-content: space-between; padding: 8px 0 8px 8px; }
.browser { width: 400px; }
.browser h2, .comments { background: #f1f1f1; border: 1px solid #ccc; border-bottom-width: 2px; color: #666; }
.browser h2 { display: flex; align-items: center; gap: 20px; height: 49px; padding: 0 0 2px 9px; }
.tree { padding: 11px 0 0 38px; }
.tree li { display: flex; align-items: center; height: 40px; margin-bottom: 8px; }
.l2 { padding-left: 36px; }
.l3 { padding-left: 72px; }
.tw { width: 12px; height: 18px; margin: 0 22px 0 2px; }
.tw-open { width: 14px; height: 14px; margin: 0 21px 0 1px; }
.node { display: flex; align-items: center; flex: 1; height: 40px; padding-left: 6px; background: #f1f1f1; }
.eye { width: 32px; height: 20px; }
.second { margin-left: 18px; }
.selected { flex: 1; height: 32px; margin-left: 12px; padding: 2px 8px; background: #999; }
.model { position: absolute; left: 920px; top: 362px; width: 370px; height: 540px; }

.tooltip {
  position: absolute;
  left: 184px;
  top: 8px;
  width: 672px;
  padding: 9px 32px 6px;
  border-radius: 24px;
  background: #505050;
  box-shadow: 0 0 2px #0006, 0 12px 34px #0004;
  color: #fff;
  font: 700 26px/32px Inter, sans-serif;
  white-space: nowrap;
}
.tooltip h3 { margin-bottom: 15px; font-weight: inherit; }
.tooltip p + p { margin-top: 32px; }
.figure { width: 608px; height: 376px; margin: 48px -8px 49px; overflow: hidden; }
.dim { font: 64px "Liberation Sans", sans-serif; fill: #666; }

.dock { display: flex; align-items: flex-start; justify-content: space-between; padding-right: 88px; }
.comments { display: flex; align-items: center; width: 600px; height: 50px; margin-top: 8px; padding: 0 2px 1px 49px; border-top: 0; border-right-width: 2px; }
.comments h2 { flex: 1; }
.grip { width: 6px; height: 20px; margin-left: 15px; border: solid #888; border-width: 0 2px 0 2px; }
.navbar { display: flex; gap: 12px; height: 48px; padding: 0 8px 0 6px; background: #f1f1f1; }
.navbar button { gap: 4px; }
.navbar .wide { gap: 10px; }
.navbar .solo + .solo { margin-left: 8px; }
.navbar .solo + .wide { margin-left: 8px; }
.display { display: flex; gap: 14px; }

/* Timeline */
.timeline { flex: none; background: #f1f1f1; border-top: 4px solid #ccc; }
.scroll { padding-left: 8px; }
.thumb { width: 492px; height: 14px; border-radius: 6px; background: #ccc; }
.timeline-row { position: relative; display: flex; height: 82px; overflow: hidden; }
.playback { display: flex; gap: 18px; padding: 24px 42px 26px 18px; }
.playback svg { width: 32px; height: 32px; }
.track { display: flex; padding-top: 16px; }
.track li { width: 48px; flex: none; }
.track svg { width: 32px; height: 32px; opacity: .25; }
.track .done svg { opacity: 1; }
.track li::after { content: ""; display: block; width: 48px; height: 14px; margin: 6px 0 0 14px; border: solid #ccc; border-width: 0 0 4px 4px; }
.marker { position: absolute; left: 368px; top: 4px; width: 24px; height: 64px; }
```
